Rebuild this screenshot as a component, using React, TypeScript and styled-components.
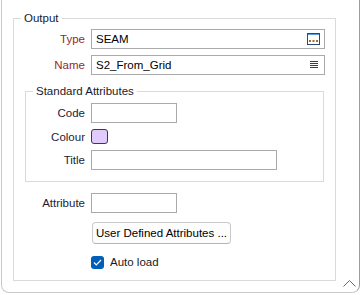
import React from "react";
import styled, { createGlobalStyle } from "styled-components";

const GlobalStyle = createGlobalStyle`
  html, body {
    margin: 0;
    padding: 0;
    background: #fff;
  }
  body {
    font-family: "Liberation Sans", Arial, sans-serif;
    font-size: 11.5px;
    color: #1a1a1a;
  }
  * {
    box-sizing: border-box;
  }
`;

const Panel = styled.div`
  position: relative;
  width: 359px;
  height: 293px;
  margin-left: 1px;
  padding: 10px 0 0 11px;
  background: #fff;
  border: 1px solid #c8c8c8;
  border-top: none;
  border-right-color: #9c9c9c;
  border-radius: 0 0 8px 8px;
`;

const Group = styled.fieldset<{ $width?: number; $margin?: string }>`
  width: ${(p) => (p.$width ? `${p.$width}px` : "auto")};
  margin: ${(p) => p.$margin || "0"};
  padding: 0;
  min-width: 0;
  border: 1px solid #dadada;
`;

const Legend = styled.legend`
  margin-left: 7px;
  padding: 0 3px;
  line-height: 16px;
  color: #1a1a2a;
`;

const Form = styled.div<{ $label: number; $pad?: string }>`
  display: grid;
  grid-template-columns: ${(p) => p.$label}px 1fr;
  column-gap: 6px;
  row-gap: 6px;
  align-items: center;
  padding: ${(p) => p.$pad || "0"};
`;

const Label = styled.label<{ $required?: boolean }>`
  text-align: right;
  line-height: 14px;
  white-space: nowrap;
  color: ${(p) => (p.$required ? "#9c1f24" : "#1c1c3a")};
`;

const Field = styled.div<{ $width?: number }>`
  display: flex;
  align-items: center;
  width: ${(p) => (p.$width ? `${p.$width}px` : "100%")};
  height: 20px;
  padding: 0 4px;
  background: #fff;
  border: 1px solid #aaaaaa;
  color: #000;
`;

const Value = styled.span`
  flex: 1;
  line-height: 18px;
`;

const Swatch = styled.div<{ $color: string }>`
  width: 17px;
  height: 15px;
  background: ${(p) => p.$color};
  border: 1px solid #3c3c3c;
  border-radius: 3px;
`;

const BrowseIcon = styled.svg`
  display: block;
`;

const ListIcon = styled.svg`
  display: block;
  margin-right: 2px;
`;

const Button = styled.button`
  width: 139px;
  height: 22px;
  margin: 3px 0 0 1px;
  padding: 0 3px;
  text-align: left;
  white-space: nowrap;
  overflow: hidden;
  font: inherit;
  color: #000;
  background: #fdfdfd;
  border: 1px solid #cacaca;
  border-bottom-color: #b4b4b4;
  border-radius: 4px;
`;

const Check = styled.label`
  display: flex;
  align-items: center;
  gap: 6px;
  height: 14px;
  margin-top: 5px;
  color: #1a1a1a;
`;

const Box = styled.span`
  display: flex;
  align-items: center;
  justify-content: center;
  width: 13px;
  height: 13px;
  background: #005fb8;
  border-radius: 3px;
`;

const Collapse = styled.svg`
  position: absolute;
  right: 3px;
  bottom: 5px;
`;

export default function App() {
  return (
    <>
      <GlobalStyle />
      <Panel>
        <Group $width={323}>
          <Legend>Output</Legend>
          <Form $label={71} $pad="3px 10px 0 0">
            <Label $required>Type</Label>
            <Field>
              <Value>SEAM</Value>
              <BrowseIcon width="13" height="12" viewBox="0 0 13 12">
                <rect x="0.5" y="0.5" width="12" height="11" fill="#fff" stroke="#2e4a68" />
                <rect x="1" y="1" width="11" height="1" fill="#5a9ad8" />
                <rect x="2" y="7" width="2" height="2" fill="#a06f2c" />
                <rect x="5.5" y="7" width="2" height="2" fill="#a06f2c" />
                <rect x="9" y="7" width="2" height="2" fill="#a06f2c" />
              </BrowseIcon>
            </Field>
            <Label $required>Name</Label>
            <Field>
              <Value>S2_From_Grid</Value>
              <ListIcon width="8" height="8" viewBox="0 0 8 8">
                <rect x="0" y="0" width="8" height="1" fill="#3c3c3c" />
                <rect x="0" y="2" width="8" height="1" fill="#3c3c3c" />
                <rect x="0" y="4" width="8" height="1" fill="#3c3c3c" />
                <rect x="0" y="6" width="8" height="1" fill="#3c3c3c" />
              </ListIcon>
            </Field>
          </Form>

          <Group $margin="8px 11px 0 11px">
            <Legend>Standard Attributes</Legend>
            <Form $label={59} $pad="4px 0 11px 0">
              <Label>Code</Label>
              <Field $width={86} />
              <Label>Colour</Label>
              <Swatch $color="#e1cafc" />
              <Label>Title</Label>
              <Field $width={186} />
            </Form>
          </Group>

          <Form $label={71} $pad="11px 0 11px 0">
            <Label>Attribute</Label>
            <Field $width={86} />
            <span />
            <Button>User Defined Attributes ...</Button>
            <span />
            <Check>
              <Box>
                <svg width="9" height="7" viewBox="0 0 9 7">
                  <polyline points="1,3.5 3.3,5.8 8,1" fill="none" stroke="#fff" strokeWidth="1.2" />
                </svg>
              </Box>
              Auto load
            </Check>
          </Form>
        </Group>

        <Collapse width="13" height="7" viewBox="0 0 13 7">
          <polyline points="0.5,6.5 6.5,0.5 12.5,6.5" fill="none" stroke="#6a6a6a" strokeWidth="1" />
        </Collapse>
      </Panel>
    </>
  );
}
